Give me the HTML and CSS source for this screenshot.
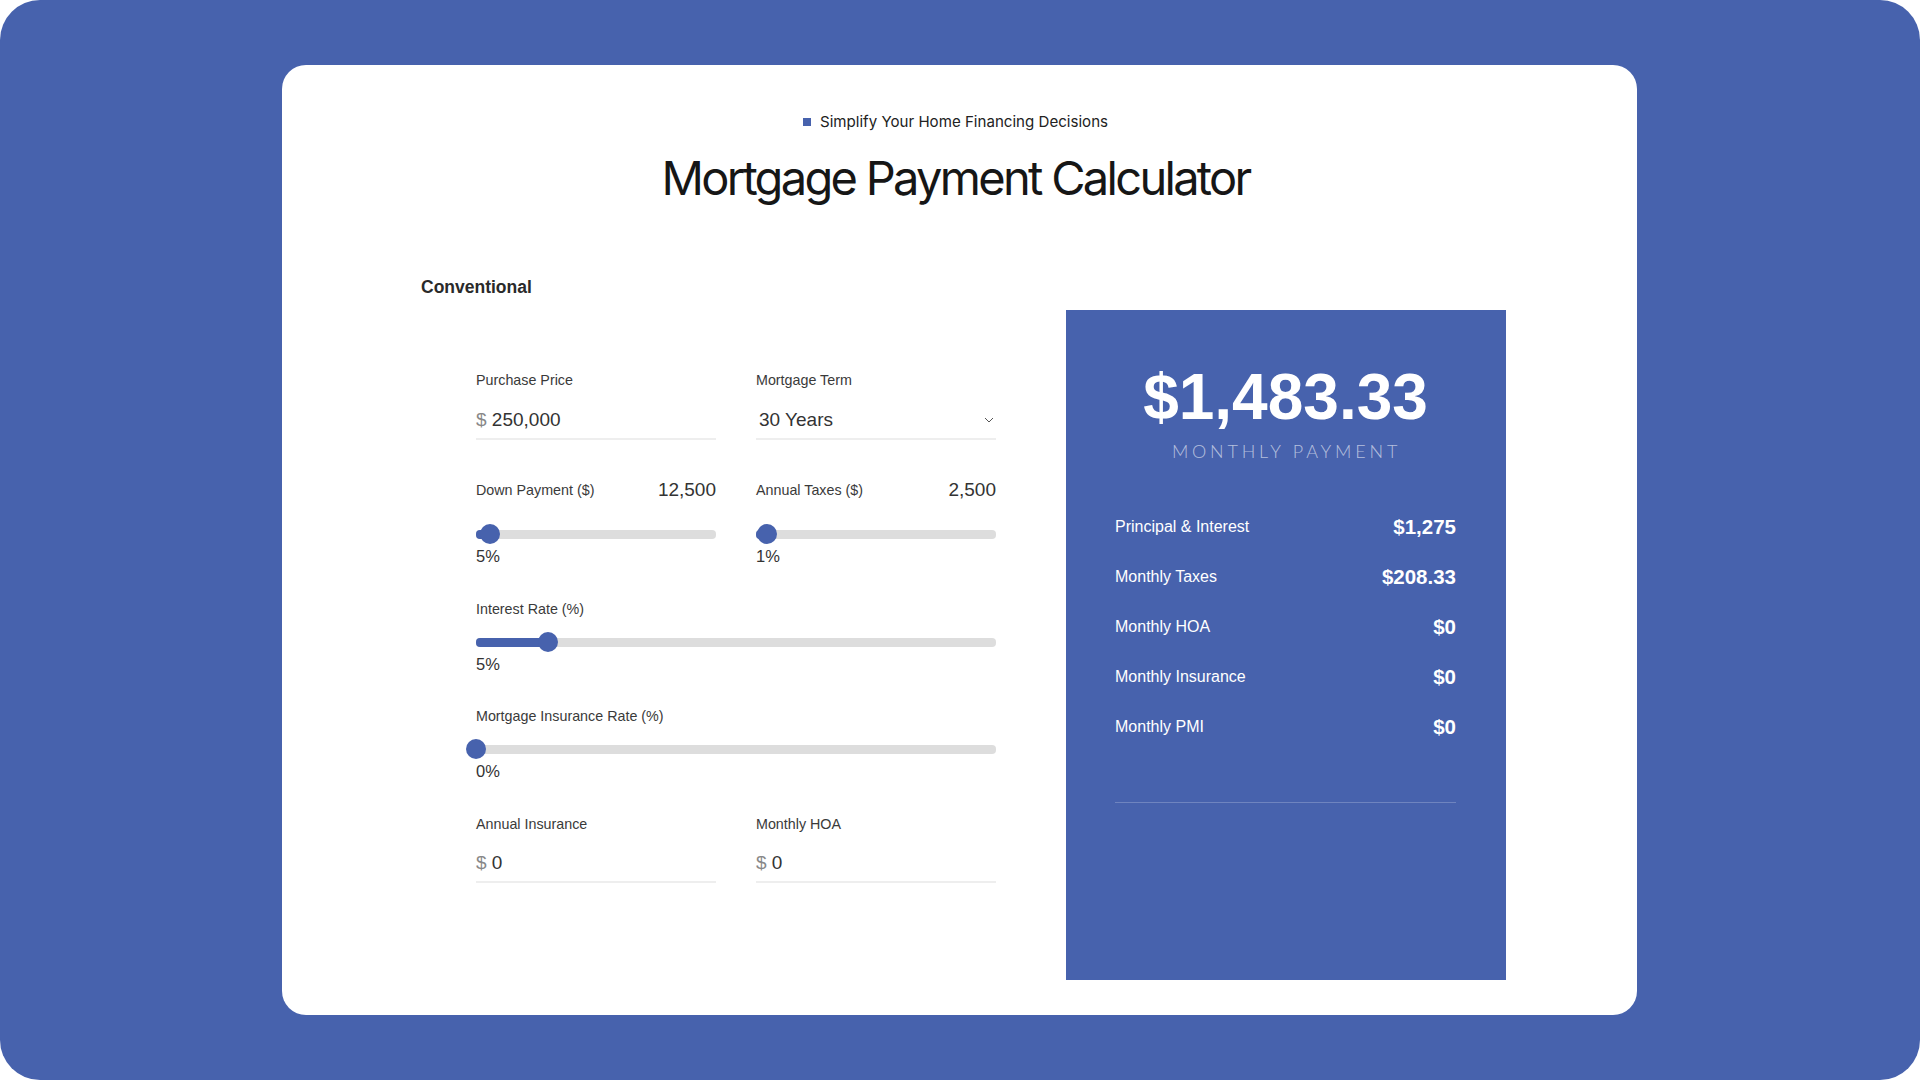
FILE: index.html
```html
<!DOCTYPE html>
<html lang="en">
<head>
<meta charset="utf-8">
<title>Mortgage Payment Calculator</title>
<link rel="stylesheet" href="styles.css">
</head>
<body>
<div class="frame">
  <div class="card">
    <header class="head">
      <div class="tagline"><span class="tag-square"></span>Simplify Your Home Financing Decisions</div>
      <h1 class="title">Mortgage Payment Calculator</h1>
    </header>
    <div class="content">
      <section class="left">
        <h2 class="section-title">Conventional</h2>
        <div class="form">
          <div class="pair g1">
            <div class="field">
              <div class="label-row"><span class="label">Purchase Price</span></div>
              <div class="input-line"><span class="cur">$</span> 250,000</div>
            </div>
            <div class="field">
              <div class="label-row"><span class="label">Mortgage Term</span></div>
              <div class="input-line select"><span class="sel-text">30 Years</span>
                <svg class="chev" width="10" height="6" viewBox="0 0 10 6"><path d="M1 1 L5 5 L9 1" fill="none" stroke="#555" stroke-width="1"/></svg>
              </div>
            </div>
          </div>

          <div class="pair g2">
            <div class="field">
              <div class="label-row"><span class="label">Down Payment ($)</span><span class="value">12,500</span></div>
              <div class="slider s-big">
                <div class="track"><div class="fill" style="width:14px"></div></div>
                <div class="thumb" style="left:14px"></div>
              </div>
              <div class="pct">5%</div>
            </div>
            <div class="field">
              <div class="label-row"><span class="label">Annual Taxes ($)</span><span class="value">2,500</span></div>
              <div class="slider s-big">
                <div class="track"><div class="fill" style="width:11px"></div></div>
                <div class="thumb" style="left:11px"></div>
              </div>
              <div class="pct">1%</div>
            </div>
          </div>

          <div class="full g3">
            <div class="label-row"><span class="label">Interest Rate (%)</span></div>
            <div class="slider s-small">
              <div class="track"><div class="fill" style="width:72px"></div></div>
              <div class="thumb" style="left:72px"></div>
            </div>
            <div class="pct">5%</div>
          </div>

          <div class="full g4">
            <div class="label-row"><span class="label">Mortgage Insurance Rate (%)</span></div>
            <div class="slider s-small">
              <div class="track"><div class="fill" style="width:0px"></div></div>
              <div class="thumb" style="left:0px"></div>
            </div>
            <div class="pct">0%</div>
          </div>

          <div class="pair g5">
            <div class="field">
              <div class="label-row"><span class="label">Annual Insurance</span></div>
              <div class="input-line"><span class="cur">$</span> 0</div>
            </div>
            <div class="field">
              <div class="label-row"><span class="label">Monthly HOA</span></div>
              <div class="input-line"><span class="cur">$</span> 0</div>
            </div>
          </div>
        </div>
      </section>

      <aside class="panel">
        <div class="amount">$1,483.33</div>
        <div class="amount-label">MONTHLY PAYMENT</div>
        <ul class="rows">
          <li class="row"><span>Principal &amp; Interest</span><strong>$1,275</strong></li>
          <li class="row"><span>Monthly Taxes</span><strong>$208.33</strong></li>
          <li class="row"><span>Monthly HOA</span><strong>$0</strong></li>
          <li class="row"><span>Monthly Insurance</span><strong>$0</strong></li>
          <li class="row"><span>Monthly PMI</span><strong>$0</strong></li>
        </ul>
        <div class="divider"></div>
      </aside>
    </div>
  </div>
</div>
</body>
</html>
```

FILE: styles.css
```css
* { box-sizing: border-box; }
html, body { margin: 0; padding: 0; background: #ffffff; }
body { font-family: "Liberation Sans", Arial, sans-serif; color: #333; }

.frame {
  width: 1920px;
  height: 1080px;
  background: #4762ad;
  border-radius: 40px;
  padding-top: 65px;
  overflow: hidden;
}

.card {
  width: 1355px;
  height: 950px;
  margin-left: 282px;
  background: #ffffff;
  border-radius: 24px;
  padding: 46px 131px 0 139px;
  display: flex;
  flex-direction: column;
}

.head { text-align: center; margin-left: -16px; }

.tagline {
  font-family: Inter, "Liberation Sans", sans-serif;
  font-size: 15.1px;
  line-height: 20px;
  color: #222;
  display: flex;
  justify-content: center;
  align-items: center;
  gap: 9px;
  margin-top: 1px;
}
.tag-square { width: 8px; height: 8px; background: #4762ad; display: inline-block; }

.title {
  margin: 16px 0 0;
  font-family: Inter, "Liberation Sans", sans-serif;
  font-weight: 400;
  font-size: 47px;
  line-height: 60px;
  color: #161616;
  letter-spacing: -2.7px;
}

.content { display: flex; align-items: flex-start; }

.left { width: 645px; }

.section-title {
  margin: 68px 0 0;
  font-size: 17.5px;
  line-height: 22px;
  font-weight: 700;
  color: #2a2a2a;
}

.form { margin-left: 55px; width: 520px; padding-top: 70px; }

.pair { display: flex; gap: 40px; }
.field { width: 240px; }

.label-row {
  height: 24px;
  display: flex;
  justify-content: space-between;
  align-items: center;
}
.label { font-size: 14.3px; color: #3a3a3a; }
.value { font-size: 19px; color: #333; }

.input-line {
  margin-top: 16px;
  font-size: 19px;
  line-height: 24px;
  color: #333;
  padding-bottom: 6px;
  border-bottom: 2px solid #eeeeee;
}
.cur { color: #888; }
.select { display: flex; justify-content: space-between; align-items: center; padding-left: 3px; }
.chev { margin-right: 2px; }

.g2 { margin-top: 38px; }
.g3 { margin-top: 32px; }
.g4 { margin-top: 31px; }
.g5 { margin-top: 32px; }
.g5 .input-line { margin-top: 15px; }

.slider { position: relative; height: 20px; display: flex; align-items: center; }
.s-big { margin-top: 22px; }
.s-small { margin-top: 11px; }
.track {
  width: 100%;
  height: 9px;
  border-radius: 4px;
  background: #dddddd;
  overflow: hidden;
}
.fill { height: 100%; background: #4762ad; }
.thumb {
  position: absolute;
  top: 0;
  width: 20px;
  height: 20px;
  border-radius: 50%;
  background: #4762ad;
  transform: translateX(-50%);
}

.pct { margin-top: 3px; font-size: 16.5px; line-height: 18px; color: #333; }

.panel {
  margin-top: 102px;
  width: 440px;
  height: 670px;
  background: #4762ad;
  padding: 51px 50px 0 49px;
  color: #ffffff;
}
.amount {
  text-align: center;
  font-size: 64px;
  line-height: 72px;
  font-weight: 700;
}
.amount-label {
  margin-top: 7px;
  text-align: center;
  font-family: Lato, "Open Sans", sans-serif;
  font-weight: 300;
  font-size: 18px;
  line-height: 22px;
  letter-spacing: 3.8px;
  color: rgba(255, 255, 255, 0.6);
  margin-right: -2px;
}
.rows { list-style: none; margin: 40px 0 0; padding: 0; }
.row {
  height: 50px;
  display: flex;
  justify-content: space-between;
  align-items: center;
  font-size: 16px;
}
.row strong { font-size: 20.5px; font-weight: 700; }
.divider { margin-top: 50px; height: 1px; background: rgba(255, 255, 255, 0.22); }
```
